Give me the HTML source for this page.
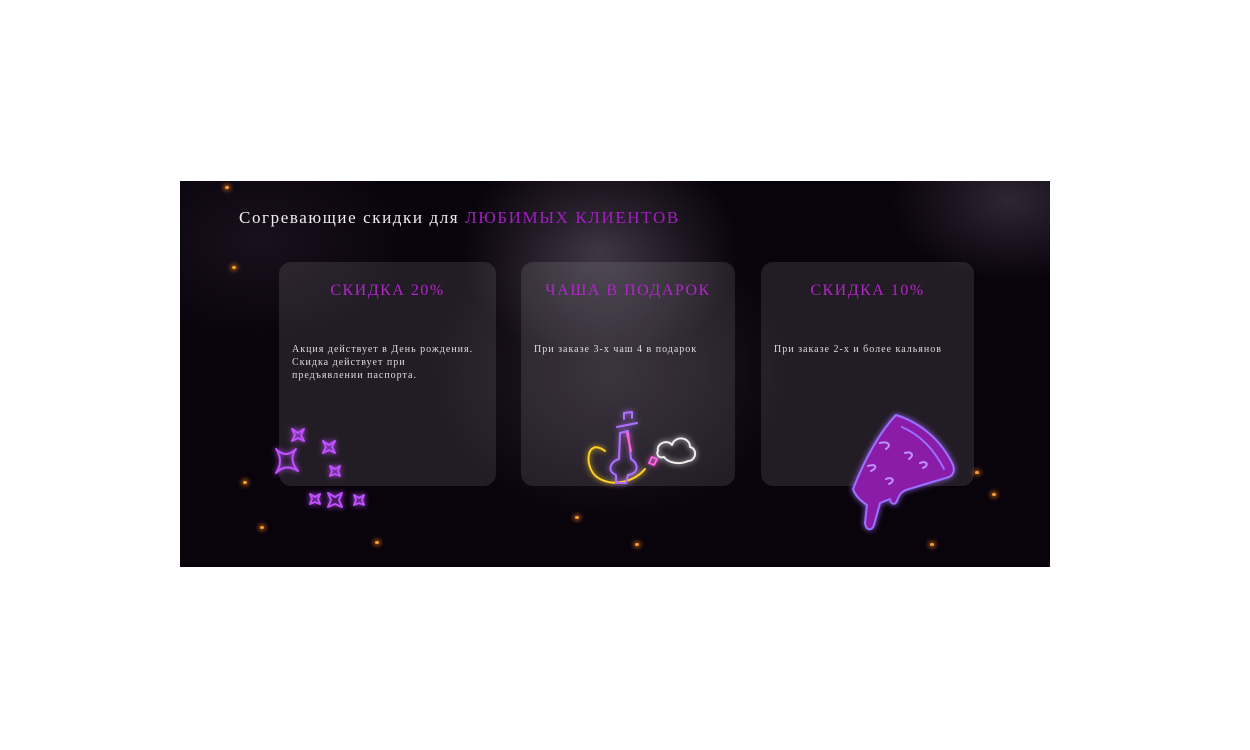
<!DOCTYPE html>
<html><head><meta charset="utf-8"><style>
body{margin:0;width:1250px;height:750px;background:#fff;position:relative;overflow:hidden;font-family:"Liberation Serif",serif}
.ban{position:absolute;left:180px;top:181px;width:870px;height:386px;overflow:hidden;
background:radial-gradient(ellipse 140px 110px at 420px 70px,rgba(150,140,160,.35),transparent),
radial-gradient(ellipse 180px 150px at 430px 190px,rgba(120,110,130,.25),transparent),
radial-gradient(ellipse 120px 80px at 830px 20px,rgba(90,80,100,.45),transparent),
radial-gradient(ellipse 150px 100px at 80px 60px,rgba(70,60,80,.25),transparent),
#09030c}
h1{position:absolute;left:59px;top:27px;margin:0;font-weight:normal;font-size:17px;letter-spacing:1.6px;color:#eee}
h1 span{color:#a11fc0}
.c{position:absolute;top:81px;height:224px;border-radius:12px;background:rgba(255,255,255,.1)}
.c h2{margin:20px 0 0;text-align:center;font-weight:normal;font-size:16px;letter-spacing:1.5px;color:#b026c9}
.c p{margin:43px 0 0 13px;font-size:10px;line-height:13px;letter-spacing:1px;color:#ddd}
.sp{position:absolute;width:4px;height:3px;border-radius:50%;background:#f5a030;box-shadow:0 0 4px 2px rgba(230,120,20,.6)}
</style></head><body>
<div class="ban">
<h1>Согревающие скидки для <span>ЛЮБИМЫХ КЛИЕНТОВ</span></h1>
<div class="c" style="left:99px;width:217px"><h2>СКИДКА 20%</h2><p>Акция действует в День рождения.<br>Скидка действует при<br>предъявлении паспорта.</p></div>
<div class="c" style="left:341px;width:214px"><h2>ЧАША В ПОДАРОК</h2><p>При заказе 3-х чаш 4 в подарок</p></div>
<div class="c" style="left:581px;width:213px"><h2>СКИДКА 10%</h2><p>При заказе 2-х и более кальянов</p></div>
<div class="sp" style="left:45px;top:5px"></div><div class="sp" style="left:52px;top:85px"></div>
<div class="sp" style="left:63px;top:300px"></div><div class="sp" style="left:80px;top:345px"></div>
<div class="sp" style="left:195px;top:360px"></div><div class="sp" style="left:455px;top:362px"></div>
<div class="sp" style="left:395px;top:335px"></div><div class="sp" style="left:750px;top:362px"></div>
<div class="sp" style="left:812px;top:312px"></div><div class="sp" style="left:795px;top:290px"></div>
<svg width="870" height="386" style="position:absolute;left:0;top:0" fill="none" stroke-linecap="round" stroke-linejoin="round">
<defs><filter id="g"><feGaussianBlur stdDeviation="3" result="b"/><feMerge><feMergeNode in="b"/><feMergeNode in="SourceGraphic"/></feMerge></filter></defs>
<g filter="url(#g)" stroke="#c050ff" stroke-width="2">
<path d="M96 268 q10 10 20 0 q-8 10 2 22 q-12 -8 -22 2 q8 -12 0 -24z"/>
<path d="M112 248 l6 4 l6 -4 l-3 6 l3 6 l-6 -3 l-6 3 l3 -6z"/>
<path d="M143 260 l6 4 l6 -4 l-3 6 l3 6 l-6 -3 l-6 3 l3 -6z"/>
<path d="M150 285 l5 3 l5 -3 l-2 5 l2 5 l-5 -2 l-5 2 l2 -5z"/>
<path d="M130 313 l5 3 l5 -3 l-2 5 l2 5 l-5 -2 l-5 2 l2 -5z"/>
<path d="M148 312 l7 4 l7 -4 l-3 7 l3 7 l-7 -3 l-7 3 l3 -7z"/>
<path d="M174 314 l5 3 l5 -3 l-2 5 l2 5 l-5 -2 l-5 2 l2 -5z"/>
</g>
<g filter="url(#g)" stroke-width="2">
<path stroke="#ffd020" d="M425 270 c-20 -15 -22 20 -5 28 c15 8 35 2 45 -10"/>
<path stroke="#b070ff" d="M440 252 l8 -2 l3 28 c8 5 8 14 -3 16 l-2 8 l-10 0 l0 -8 c-10 -4 -5 -14 3 -16z M437 246 l20 -4 M444 238 l0 -6 l8 -1 l0 6"/>
<path stroke="#ff60e0" d="M447 252 l4 18 M469 282 l3 -6 l5 2 l-3 6z"/>
<path stroke="#eee" d="M478 270 c-2 -8 10 -12 14 -6 c3 -10 18 -8 18 2 c8 2 6 14 -2 14 c-8 4 -20 2 -24 -4 c-6 2 -8 -4 -6 -6z"/>
<path fill="#8a1aa8" stroke="#9a70ff" d="M716 234 c25 8 45 25 57 50 c2 6 0 10 -4 12 l-40 12 c-8 2 -10 6 -12 12 c-2 4 -6 4 -7 -2 l-10 4 l-6 22 c-2 6 -8 6 -9 -2 l2 -18 c-6 -4 -12 -10 -14 -16 c10 -25 25 -55 43 -74z"/>
<path stroke="#9a70ff" d="M722 246 c18 8 32 22 42 42"/>
<path stroke="#c090ff" d="M700 262 c8 -2 12 2 6 6 M725 272 c6 -2 10 2 4 6 M688 285 c8 -3 10 2 3 5 M740 282 c6 -3 10 2 3 5 M706 298 c6 -3 10 2 3 5"/>
</g>
</svg>
</div>
</body></html>
